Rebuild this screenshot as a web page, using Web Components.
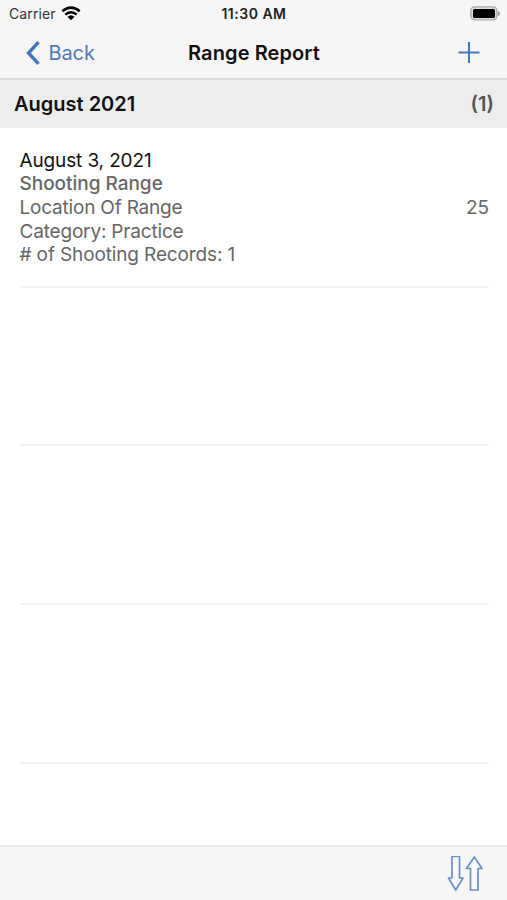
<!DOCTYPE html>
<html lang="en">
<head>
<meta charset="utf-8">
<title>Range Report</title>
<style>
html,body{margin:0;height:100%;background:#fff;overflow:hidden}
body{font-family:Inter,"Liberation Sans",sans-serif;color:#111}
</style>
</head>
<body>
<report-screen></report-screen>
<script>
const define = (name, html) => customElements.define(name, class extends HTMLElement {
  constructor() {
    super();
    this.attachShadow({mode: 'open'}).innerHTML = html;
  }
});

define('status-bar', `<style>
:host{display:grid;grid-template-columns:1fr auto 1fr;align-items:center;height:27px;padding:0 7px 0 9px;font-size:14px;line-height:27px}
.carrier{display:flex;align-items:center;gap:5px;color:#333;letter-spacing:.12px}
.time{font-weight:600;font-size:14px;letter-spacing:.5px;color:#222;margin-left:-1px}
.battery{justify-self:end}
svg{display:block}
</style>
<div class="carrier"><span>Carrier</span>
<svg width="20" height="15" viewBox="0 0 20 15" fill="none" stroke="#000" stroke-width="2.5"><path d="M1.3 5.3Q10-2 18.7 5.3M4.3 8.6Q10 3.8 15.7 8.6"/><path d="M6.5 10.8Q10 7.7 13.5 10.8L10 14.2Z" fill="#000" stroke="none"/></svg></div>
<span class="time">11:30 AM</span>
<svg class="battery" width="30" height="15" viewBox="0 0 30 15"><rect x=".9" y=".9" width="26" height="13" rx="3.8" fill="#ddd" stroke="#aaa" stroke-width="1.4"/><rect x="3" y="3" width="22" height="9" rx="1.6" fill="#000"/><path d="M28 5q2 .8 2 2.5T28 10z" fill="#999"/></svg>`);

define('nav-bar', `<style>
:host{display:grid;grid-template-columns:1fr auto 1fr;align-items:center;height:51px;padding:0 26px 0 26px;font-size:20px;line-height:50px;border-bottom:2px solid #dcdcdc;box-sizing:content-box}
.back{display:flex;align-items:center;gap:7.5px;color:#4d7abb;letter-spacing:-.1px}
.title{font-weight:600;color:#111;font-size:20px;letter-spacing:.1px;margin-left:1px}
.add{justify-self:end;margin-right:1px}
svg{display:block}
</style>
<div class="back"><svg width="15" height="24" viewBox="0 0 15 24" fill="none" stroke="#4677b9" stroke-width="3.4"><path d="M12.5 1.2 2.5 12l10 10.8"/></svg><span><slot name="back"></slot></span></div>
<span class="title"><slot></slot></span>
<svg class="add" width="22" height="22" viewBox="0 0 22 22" stroke="#4677b9" stroke-width="2"><path d="M11 0v21M.5 10.5h21"/></svg>`);

define('section-header', `<style>
:host{display:flex;justify-content:space-between;height:48px;padding:0 13px 0 14px;background:#ededed;font-size:20px;font-weight:600;line-height:48px;color:#111}
.count{color:#555}
</style><span><slot></slot></span><span class="count"><slot name="count"></slot></span>`);

define('report-row', `<style>
:host{display:flex;align-items:center;justify-content:space-between;box-sizing:border-box;height:158.67px;margin:0 18px 0 20px;border-bottom:2px solid #f2f2f2;color:#666;font-size:19px;line-height:23.67px;letter-spacing:-.13px}
.lines{display:flex;flex-direction:column;margin-left:-.5px}
</style><div class="lines"><slot></slot></div><slot name="value"></slot>`);

define('tool-bar', `<style>
:host{display:flex;justify-content:flex-end;align-items:center;box-sizing:border-box;height:55px;padding-right:24px;background:#f6f6f6;border-top:2px solid #ebebeb}
svg{display:block}
</style><svg width="36" height="36" viewBox="0 1.5 36 36" fill="#fafbfd" stroke="#6a90c6" stroke-width="1.7" stroke-linejoin="round"><path d="M5 2h7.500v21.500H16L8.700 35.500 1.500 23.500H5z"/><path d="M27.300 2.500 35 14h-4v21.500h-7.500V14h-4z"/></svg>`);

define('report-screen', `<style>
:host{display:flex;flex-direction:column;height:100vh}
header{background:#f6f6f6}
main{flex:1;overflow:hidden;min-height:0}
.first{height:159.6px;padding-top:1.8px}
.date{color:#111}.name{font-weight:500;letter-spacing:-.02px}.place{letter-spacing:-.2px}.category{letter-spacing:-.18px}
</style>
<header><status-bar></status-bar><nav-bar><span slot="back">Back</span>Range Report</nav-bar></header>
<main><section-header>August 2021<span slot="count">(1)</span></section-header>
<div class="rows"><report-row class="first"><span class="date">August 3, 2021</span><span class="name">Shooting Range</span><span class="place">Location Of Range</span><span class="category">Category: Practice</span><span># of Shooting Records: 1</span><span slot="value">25</span></report-row>
<report-row></report-row><report-row></report-row><report-row></report-row></div></main>
<tool-bar></tool-bar>`);
</script>
</body>
</html>
